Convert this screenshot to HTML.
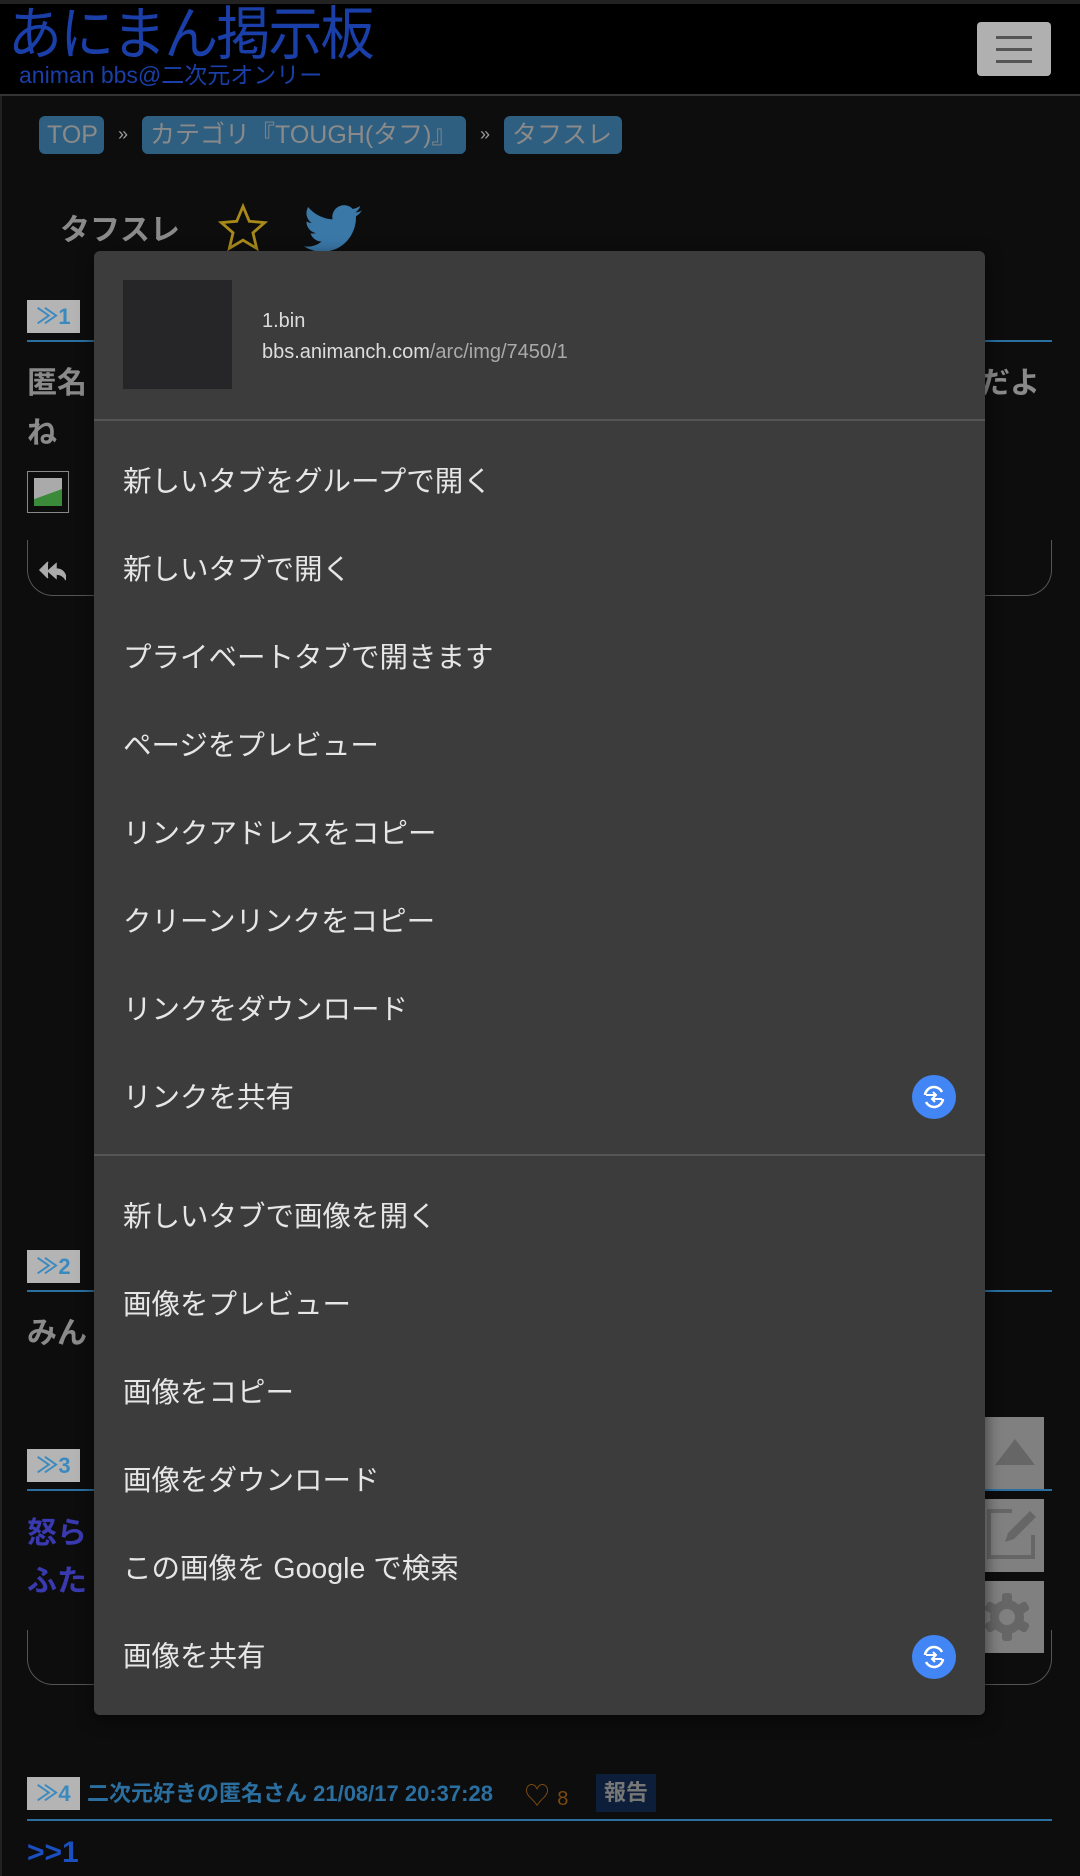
<!DOCTYPE html>
<html><head><meta charset="utf-8"><style>
*{margin:0;padding:0;box-sizing:border-box}
body{width:1080px;height:1876px;background:#0d0d0d;font-family:"Liberation Sans","Noto Sans CJK JP",sans-serif;position:relative;overflow:hidden}
.a{position:absolute;white-space:nowrap}
.bc{position:absolute;top:116px;height:38px;background:#2e5f80;color:#8a8a8a;border-radius:6px;font-size:25px;line-height:38px;padding:0 8px}
.num{position:absolute;left:27px;width:53px;height:33px;background:#b4b4b4;color:#3a8ac0;font-weight:bold;font-size:22px;line-height:33px;text-align:center}
.hl{position:absolute;left:27px;width:1025px;height:2px;background:#2a6fa0}
.mi{position:absolute;left:123px;font-size:28.5px;color:#e6e6e6;line-height:40px}
.sh{position:absolute;width:44px;height:44px;border-radius:50%;background:#4285f4}
.sb{position:absolute;left:985px;width:59px;background:#808080}
</style></head><body>
<div class="a" style="left:0;top:0;width:1080px;height:96px;background:#000;border-top:4px solid #222;border-bottom:2px solid #333"></div>
<div class="a" style="left:8px;top:2px;font-size:58px;color:#1a3fa8;line-height:66px;letter-spacing:-2px;transform:scaleX(0.93);transform-origin:left">あにまん掲示板</div>
<div class="a" style="left:19px;top:62px;font-size:23px;color:#1a3fa8;line-height:26px">animan bbs@二次元オンリー</div>
<div class="a" style="left:977px;top:22px;width:74px;height:54px;background:#b0b0b0;border-radius:4px"></div>
<div class="a" style="left:996px;top:36px;width:36px;height:3px;background:#555;box-shadow:0 12px 0 #555,0 24px 0 #555"></div>
<div class="a" style="left:0;top:96px;width:2px;height:1780px;background:#222"></div>

<div class="bc" style="left:39px;width:65px">TOP</div>
<div class="a" style="left:118px;top:124px;color:#999;font-size:18px">»</div>
<div class="bc" style="left:142px;width:324px">カテゴリ『TOUGH(タフ)』</div>
<div class="a" style="left:480px;top:124px;color:#999;font-size:18px">»</div>
<div class="bc" style="left:504px;width:118px">タフスレ</div>

<div class="a" style="left:60px;top:205px;font-size:30px;font-weight:bold;color:#8a8a8a">タフスレ</div>
<svg class="a" style="left:214px;top:202px" width="58" height="52" viewBox="0 0 24 24"><path d="M12 2l2.9 6.9 7.1.6-5.4 4.7 1.7 7.2L12 17.6l-6.3 3.8 1.7-7.2L2 9.5l7.1-.6z" fill="none" stroke="#a88a1a" stroke-width="1.3"/></svg>
<svg class="a" style="left:304px;top:204px" width="58" height="50" viewBox="0 0 24 20"><path d="M24 2.4a9.8 9.8 0 0 1-2.8.8 4.9 4.9 0 0 0 2.1-2.7 9.8 9.8 0 0 1-3.1 1.2A4.9 4.9 0 0 0 11.8 6 14 14 0 0 1 1.7.9a4.9 4.9 0 0 0 1.5 6.6A4.9 4.9 0 0 1 1 6.9a4.9 4.9 0 0 0 3.9 4.8 4.9 4.9 0 0 1-2.200.1 4.9 4.9 0 0 0 4.6 3.4A9.9 9.9 0 0 1 0 17.2 14 14 0 0 0 7.5 19.4c9.1 0 14-7.5 14-14v-.6A10 10 0 0 0 24 2.4z" fill="#3a78a8"/></svg>

<div class="num" style="top:300px">≫1</div>
<div class="hl" style="top:340px"></div>
<div class="a" style="left:27px;top:358px;font-size:30px;font-weight:bold;color:#8a8a8a">匿名</div>
<div class="a" style="left:980px;top:358px;font-size:30px;font-weight:bold;color:#8a8a8a">だよ</div>
<div class="a" style="left:27px;top:408px;font-size:30px;font-weight:bold;color:#8a8a8a">ね</div>
<div class="a" style="left:27px;top:471px;width:42px;height:42px;border:1px solid #888"><div style="margin:6px;width:28px;height:28px;background:linear-gradient(160deg,#aaa 55%,#3a8a3a 56%)"></div></div>
<div class="a" style="left:27px;top:540px;width:1025px;height:56px;border:1px solid #555;border-top:none;border-radius:0 0 26px 26px"></div>
<svg class="a" style="left:38px;top:560px" width="28" height="22" viewBox="0 0 28 22"><path d="M10 2L2 10l8 8M18 4L10 11l8 7v-4c5 0 8 2 10 6 0-7-4-11-10-11z" fill="#aaa" stroke="#aaa" stroke-width="1.5"/></svg>

<div class="num" style="top:1250px">≫2</div>
<div class="hl" style="top:1290px"></div>
<div class="a" style="left:27px;top:1308px;font-size:30px;font-weight:bold;color:#8a8a8a">みん</div>
<div class="num" style="top:1449px">≫3</div>
<div class="hl" style="top:1489px"></div>
<div class="a" style="left:27px;top:1508px;font-size:30px;font-weight:bold;color:#3a3ab0">怒ら</div>
<div class="a" style="left:27px;top:1556px;font-size:30px;font-weight:bold;color:#3a3ab0">ふた</div>
<div class="a" style="left:27px;top:1630px;width:1025px;height:55px;border:1px solid #555;border-top:none;border-radius:0 0 26px 26px"></div>

<div class="sb" style="top:1417px;height:72px"><div style="margin:22px auto 0;width:0;height:0;border-left:20px solid transparent;border-right:20px solid transparent;border-bottom:26px solid #666"></div></div>
<div class="sb" style="top:1499px;height:73px"><svg width="59" height="73" viewBox="0 0 59 73"><path d="M27 12H4v46h44V36" fill="none" stroke="#666" stroke-width="4"/><path d="M45 12l6 6-22 22-9 3 3-9z" fill="#666"/></svg></div>
<div class="sb" style="top:1581px;height:72px"><svg width="59" height="72" viewBox="0 0 59 72"><g fill="#666"><circle cx="22" cy="36" r="17"/><rect x="17" y="12" width="10" height="48" rx="3"/><rect x="17" y="12" width="10" height="48" rx="3" transform="rotate(60 22 36)"/><rect x="17" y="12" width="10" height="48" rx="3" transform="rotate(120 22 36)"/></g><circle cx="22" cy="36" r="8" fill="#808080"/></svg></div>

<div class="num" style="top:1777px">≫4</div>
<div class="a" style="left:87px;top:1778px;font-size:22px;font-weight:bold;color:#2a6fa0;line-height:32px">二次元好きの匿名さん 21/08/17 20:37:28</div>
<div class="a" style="left:524px;top:1776px;font-size:26px;color:#7a4a10">♡ <span style="font-size:20px">8</span></div>
<div class="a" style="left:596px;top:1774px;width:60px;height:38px;background:#0c1e3a;color:#777;font-weight:bold;font-size:22px;line-height:38px;text-align:center">報告</div>
<div class="hl" style="top:1819px"></div>
<div class="a" style="left:27px;top:1836px;font-size:30px;font-weight:bold;color:#1a4fc0">&gt;&gt;1</div>

<div class="a" style="left:94px;top:251px;width:891px;height:1464px;background:#3c3c3c;border-radius:6px;box-shadow:0 4px 16px rgba(0,0,0,.6)">
<div class="a" style="left:29px;top:29px;width:109px;height:109px;background:#262628"></div>
<div class="a" style="left:168px;top:59px;font-size:20px;color:#ddd">1.bin</div>
<div class="a" style="left:168px;top:90px;font-size:20px;color:#ddd">bbs.animanch.com<span style="color:#aaa">/arc/img/7450/1</span></div>
<div class="a" style="left:0;top:168px;width:891px;height:2px;background:#555"></div>
<div class="mi" style="left:29px;top:211px">新しいタブをグループで開く</div>
<div class="mi" style="left:29px;top:299px">新しいタブで開く</div>
<div class="mi" style="left:29px;top:387px">プライベートタブで開きます</div>
<div class="mi" style="left:29px;top:475px">ページをプレビュー</div>
<div class="mi" style="left:29px;top:563px">リンクアドレスをコピー</div>
<div class="mi" style="left:29px;top:651px">クリーンリンクをコピー</div>
<div class="mi" style="left:29px;top:739px">リンクをダウンロード</div>
<div class="mi" style="left:29px;top:827px">リンクを共有</div>
<div class="a" style="left:0;top:903px;width:891px;height:2px;background:#555"></div>
<div class="mi" style="left:29px;top:946px">新しいタブで画像を開く</div>
<div class="mi" style="left:29px;top:1034px">画像をプレビュー</div>
<div class="mi" style="left:29px;top:1122px">画像をコピー</div>
<div class="mi" style="left:29px;top:1210px">画像をダウンロード</div>
<div class="mi" style="left:29px;top:1298px">この画像を Google で検索</div>
<div class="mi" style="left:29px;top:1386px">画像を共有</div>
<div class="sh" style="left:818px;top:824px"><svg width="44" height="44" viewBox="0 0 44 44"><path d="M13 20a9 9 0 0 1 17-3M31 24a9 9 0 0 1-17 3" fill="none" stroke="#fff" stroke-width="2.5"/><path d="M14 20h10m-3-3l3 3-3 3M30 24H20m3-3l-3 3 3 3" fill="none" stroke="#fff" stroke-width="2"/></svg></div>
<div class="sh" style="left:818px;top:1384px"><svg width="44" height="44" viewBox="0 0 44 44"><path d="M13 20a9 9 0 0 1 17-3M31 24a9 9 0 0 1-17 3" fill="none" stroke="#fff" stroke-width="2.5"/><path d="M14 20h10m-3-3l3 3-3 3M30 24H20m3-3l-3 3 3 3" fill="none" stroke="#fff" stroke-width="2"/></svg></div>
</div>
</body></html>
